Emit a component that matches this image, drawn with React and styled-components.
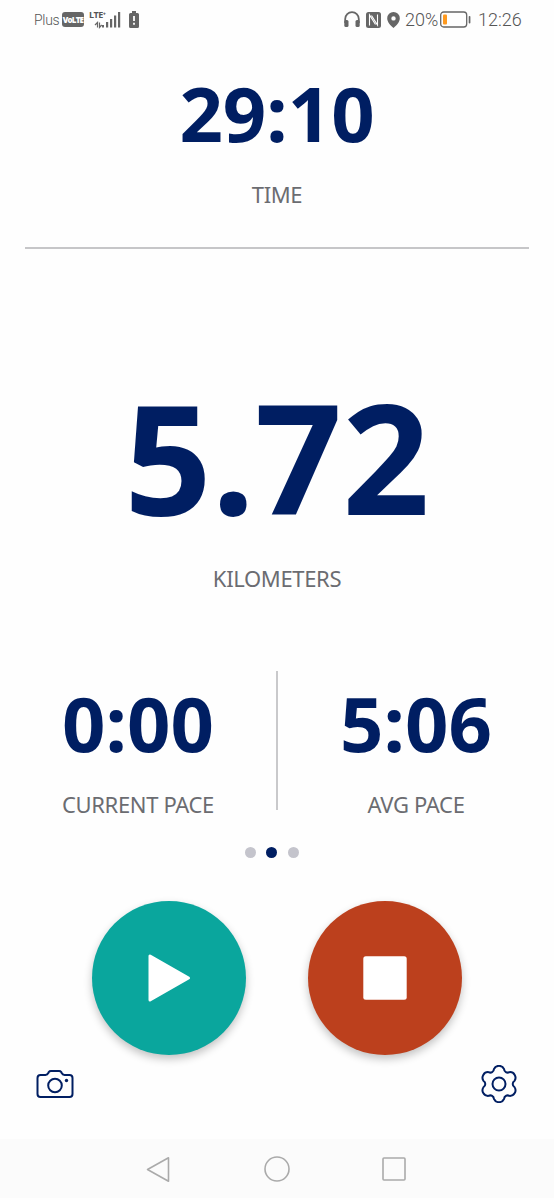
import React from "react";
import styled, { createGlobalStyle } from "styled-components";

const GlobalStyle = createGlobalStyle`
  * {
    box-sizing: border-box;
  }
  body {
    margin: 0;
    background: #fefefe;
    font-family: "Noto Sans", sans-serif;
  }
  svg {
    display: block;
    flex-shrink: 0;
  }
`;

const Screen = styled.div`
  display: flex;
  flex-direction: column;
  width: 554px;
  height: 1200px;
  overflow: hidden;
`;
const StatusBar = styled.div`
  display: flex;
  justify-content: space-between;
  align-items: center;
  height: 39px;
  padding: 0 32px 0 34px;
  color: #555;
  font-family: Roboto, sans-serif;
`;
const StatusGroup = styled.div`
  display: flex;
  align-items: center;
`;
const StatusIcons = styled.div`
  display: flex;
  align-items: center;
  gap: 6px;
  margin-right: 3px;
`;
const StatusText = styled.div`
  width: ${(props) => props.$width}px;
  margin-left: ${(props) => props.$gap || 0}px;
  font-size: ${(props) => props.$size}px;
  font-weight: 300;
  line-height: 20px;
  letter-spacing: ${(props) => props.$spacing || 0}px;
  white-space: nowrap;
`;
const VolteBadge = styled.div`
  display: flex;
  justify-content: center;
  width: 22px;
  height: 15px;
  margin: 0 5px 0 3px;
  border-radius: 3px;
  background: #666;
  color: #fff;
  font-family: "Open Sans", sans-serif;
  font-size: 8px;
  font-weight: 800;
  line-height: 15px;
  letter-spacing: -0.8px;
`;
const Signal = styled.div`
  display: flex;
  width: 32px;
  height: 20px;
  margin-right: 8px;
`;
const NetworkType = styled.div`
  width: 0;
  font-family: "Open Sans", sans-serif;
  font-size: 9px;
  font-weight: 700;
  line-height: 9px;
  letter-spacing: -0.5px;
  white-space: nowrap;
`;
const TimeSection = styled.div`
  display: flex;
  flex-direction: column;
  align-items: center;
  height: 210px;
  margin: 0 25px;
  padding-top: 36px;
  border-bottom: 2px solid #c6c6c8;
`;
const DistanceSection = styled.div`
  display: flex;
  flex-direction: column;
  align-items: center;
  height: 422px;
  padding-top: 130px;
`;
const Value = styled.div`
  color: #001e62;
  font-size: ${(props) => (props.$large ? 153 : 76)}px;
  font-weight: 700;
  line-height: 1;
`;
const Label = styled.div`
  margin-top: ${(props) => props.$top || 32}px;
  color: #6b6c71;
  font-size: 22px;
  line-height: 22px;
  letter-spacing: -0.35px;
`;
const PaceSection = styled.div`
  display: flex;
  height: 139px;
`;
const Pace = styled.div`
  display: flex;
  flex: 1;
  flex-direction: column;
  align-items: center;
  padding-top: 14px;
`;
const Divider = styled.div`
  width: 2px;
  background: #c9c9cb;
`;
const Pager = styled.div`
  display: flex;
  justify-content: center;
  gap: 10.5px;
  height: 11px;
  margin: 36.5px 11px 0 0;
`;
const Dot = styled.div`
  width: 11px;
  height: 11px;
  border-radius: 50%;
  background: ${(props) => (props.$active ? "#001e62" : "#c4c4cc")};
`;
const Controls = styled.div`
  display: flex;
  justify-content: center;
  gap: 62px;
  margin-top: 43.5px;
`;
const RoundButton = styled.button`
  display: flex;
  justify-content: center;
  align-items: center;
  width: 154px;
  height: 154px;
  padding: 0;
  border: none;
  border-radius: 50%;
  background: ${(props) => props.$color};
  box-shadow: 0 4px 8px rgba(0, 0, 0, 0.24);
`;
const Tools = styled.div`
  display: flex;
  justify-content: space-between;
  align-items: center;
  height: 40px;
  margin-top: 9px;
  padding: 0 36.5px 0 36px;
`;
const NavBar = styled.div`
  display: flex;
  justify-content: space-between;
  align-items: center;
  height: 59px;
  margin-top: auto;
  margin-bottom: 2px;
  padding: 1px 148px 0 146px;
  background: #fbfbfb;
`;

const SignalIcon = () => (
  <svg width="32" height="20" viewBox="0 0 32 20" fill="#666">
    <path d="M8.5 17.5V12.5L6 15M10.500 12.500V17.500l2.200-2.500" fill="none" stroke="#666" strokeWidth="1.2" />
    <rect x="13" y="15" width="2" height="2.5" />
    <rect x="17" y="12" width="2.2" height="5.5" />
    <rect x="21" y="9" width="2.2" height="8.5" />
    <rect x="25" y="5.5" width="2.2" height="12" />
    <rect x="29" y="2" width="2.2" height="15.5" />
  </svg>
);

const BatteryAlertIcon = () => (
  <svg width="10" height="17" viewBox="0 0 10 17">
    <path d="M3 0h4v2h1.500q1.500 0 1.500 1.500v12q0 1.500-1.500 1.500h-7q-1.500 0-1.500-1.500v-12q0-1.500 1.500-1.500h1.500z" fill="#666" />
    <path d="M5 5v5M5 11.700v2" stroke="#fff" strokeWidth="1.8" />
  </svg>
);

const HeadphonesIcon = () => (
  <svg width="16" height="17" viewBox="0 0 16 17">
    <path d="M1.200 12V8a6.800 6.800 0 0 1 13.600 0v4" fill="none" stroke="#666" strokeWidth="1.8" />
    <rect x="0.3" y="9" width="4.2" height="7" rx="1.5" fill="#666" />
    <rect x="11.5" y="9" width="4.2" height="7" rx="1.5" fill="#666" />
  </svg>
);

const NfcIcon = () => (
  <svg width="15" height="16" viewBox="0 0 15 16">
    <rect width="15" height="16" rx="2.5" fill="#666" />
    <path d="M3.500 13.500V3L9.500 12.500M5.500 3.500L11.500 13V2.500" fill="none" stroke="#fff" strokeWidth="1.1" />
  </svg>
);

const PinIcon = () => (
  <svg width="13" height="16" viewBox="0 0 13 16">
    <path
      d="M6.500 0a6.300 6.300 0 0 1 6.300 6.300c0 3.800-3.500 7.500-6.300 9.700C3.700 13.800.200 10.100.200 6.300A6.300 6.300 0 0 1 6.500 0zm0 4.200a2.200 2.200 0 1 0 0 4.400 2.200 2.200 0 0 0 0-4.400z"
      fill="#666"
    />
  </svg>
);

const BatteryIcon = () => (
  <svg width="31" height="17" viewBox="0 0 31 17">
    <rect x="0.7" y="1" width="26" height="15" rx="3" fill="none" stroke="#666" strokeWidth="1.3" />
    <rect x="3" y="3.5" width="4" height="10" rx="1" fill="#ff9a1f" />
    <rect x="28.7" y="5" width="1.7" height="7.5" rx="0.8" fill="#666" />
  </svg>
);

const PlayIcon = () => (
  <svg width="43" height="50" viewBox="0 0 43 50">
    <path d="M2 3v44L40.500 25z" fill="#fff" stroke="#fff" strokeWidth="3" strokeLinejoin="round" />
  </svg>
);

const StopIcon = () => (
  <svg width="44" height="44" viewBox="0 0 44 44">
    <rect x="0.3" y="0.3" width="43.4" height="43.4" rx="2.5" fill="#fff" />
  </svg>
);

const CameraIcon = () => (
  <svg width="38" height="30" viewBox="0 0 38 30" fill="none" stroke="#001e62" strokeWidth="2">
    <path
      d="M4.500 6H9.500Q11.500 6 12.200 4.200L12.800 3Q13.500 2 15 2H23Q24.500 2 25.200 3L25.800 4.200Q26.500 6 28.500 6H33.500Q36.500 6 36.500 9V25Q36.500 28 33.500 28H4.500Q1.500 28 1.500 25V9Q1.500 6 4.500 6Z"
      strokeLinejoin="round"
    />
    <circle cx="19" cy="16.5" r="6.8" />
    <circle cx="30.5" cy="11.5" r="1.7" fill="#001e62" stroke="none" />
  </svg>
);

// six rounded lobes, the first one pointing up, joined by shallow hollows
const gearPoint = (deg) => {
  const a = (deg * Math.PI) / 180;
  return `${(19 + 15.7 * Math.sin(a)).toFixed(2)} ${(19 - 15.7 * Math.cos(a)).toFixed(2)}`;
};
const gearPath =
  `M${gearPoint(-19)}` +
  [0, 60, 120, 180, 240, 300]
    .map((deg) => `A5.600 5.600 0 0 1 ${gearPoint(deg + 19)}A3.500 3.500 0 0 0 ${gearPoint(deg + 41)}`)
    .join("") +
  "Z";

const SettingsIcon = () => (
  <svg width="38" height="38" viewBox="0 0 38 38" fill="none" stroke="#001e62" strokeWidth="2">
    <path d={gearPath} strokeLinejoin="round" />
    <circle cx="19" cy="19" r="6.5" />
  </svg>
);

const NavIcon = styled.svg`
  fill: none;
  stroke: #aaa;
  stroke-width: 1.6;
  stroke-linejoin: round;
`;

const App = () => {
  const paces = [
    { id: 0, value: "0:00", label: "CURRENT PACE" },
    { id: 1, value: "5:06", label: "AVG PACE" },
  ];

  return (
    <>
      <GlobalStyle />
      <Screen>
        <StatusBar>
          <StatusGroup>
            <StatusText $width={25} $size={14} $spacing={-0.3}>Plus</StatusText>
            <VolteBadge>VoLTE</VolteBadge>
            <Signal>
              <NetworkType>LTE⁺</NetworkType>
              <SignalIcon />
            </Signal>
            <BatteryAlertIcon />
          </StatusGroup>
          <StatusGroup>
            <StatusIcons>
              <HeadphonesIcon />
              <NfcIcon />
              <PinIcon />
            </StatusIcons>
            <StatusText $width={35} $gap={2} $size={18}>20%</StatusText>
            <BatteryIcon />
            <StatusText $width={44} $gap={7} $size={18}>12:26</StatusText>
          </StatusGroup>
        </StatusBar>

        <TimeSection>
          <Value>29:10</Value>
          <Label>TIME</Label>
        </TimeSection>

        <DistanceSection>
          <Value $large>5.72</Value>
          <Label $top={35}>KILOMETERS</Label>
        </DistanceSection>

        <PaceSection>
          <Pace>
            <Value>{paces[0].value}</Value>
            <Label>{paces[0].label}</Label>
          </Pace>
          <Divider />
          <Pace>
            <Value>{paces[1].value}</Value>
            <Label>{paces[1].label}</Label>
          </Pace>
        </PaceSection>

        <Pager>
          <Dot />
          <Dot $active />
          <Dot />
        </Pager>

        <Controls>
          <RoundButton $color="#0aa69d" aria-label="Resume">
            <PlayIcon />
          </RoundButton>
          <RoundButton $color="#bc401d" aria-label="Stop">
            <StopIcon />
          </RoundButton>
        </Controls>

        <Tools>
          <CameraIcon />
          <SettingsIcon />
        </Tools>

        <NavBar>
          <NavIcon width="25" height="27" viewBox="0 0 25 27">
            <path d="M1.500 13.500L22.500 1.800V25.200Z" />
          </NavIcon>
          <NavIcon width="26" height="26" viewBox="0 0 26 26">
            <circle cx="13" cy="13" r="12" />
          </NavIcon>
          <NavIcon width="24" height="24" viewBox="0 0 24 24">
            <rect x="1" y="1" width="22" height="22" rx="1" />
          </NavIcon>
        </NavBar>
      </Screen>
    </>
  );
};

export default App;
